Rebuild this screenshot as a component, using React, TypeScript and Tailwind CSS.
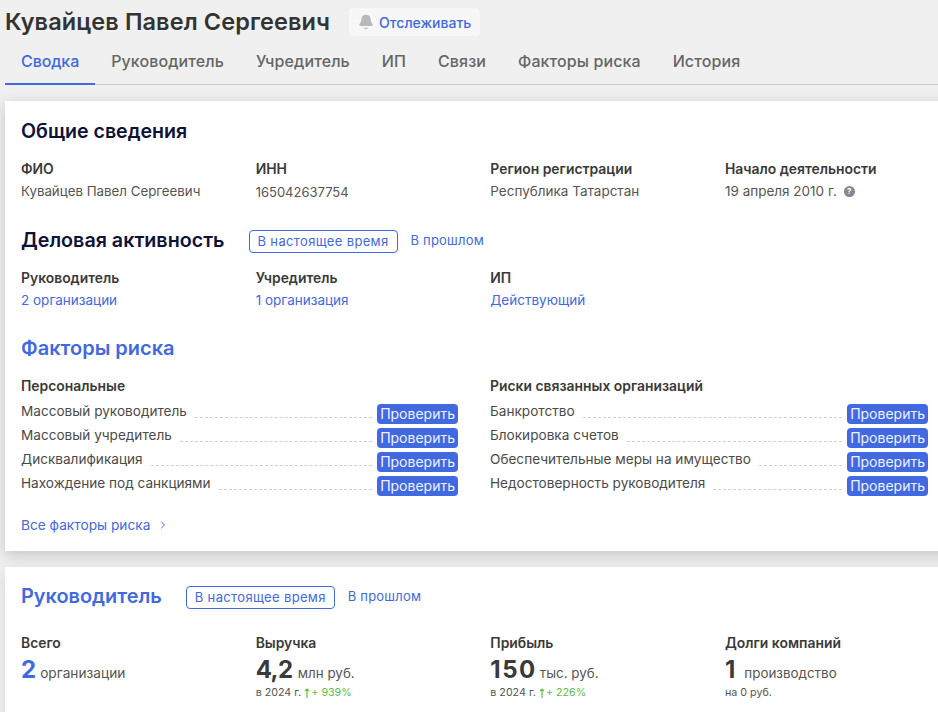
import { Bell, ChevronRight } from "lucide-react";

const tabs = ["Сводка", "Руководитель", "Учредитель", "ИП", "Связи", "Факторы риска", "История"];

const personal = ["Массовый руководитель", "Массовый учредитель", "Дисквалификация", "Нахождение под санкциями"];
const related = ["Банкротство", "Блокировка счетов", "Обеспечительные меры на имущество", "Недостоверность руководителя"];

function Label({ children }: { children: React.ReactNode }) {
  return <div className="text-[13.9px] leading-[20px] font-semibold text-[#3a3a3a]">{children}</div>;
}

function PeriodSwitch() {
  return (
    <div className="flex items-center gap-[13px] text-[13px] text-[#4169e1]">
      <span className="rounded-[4px] border border-[#4169e1] px-2 h-[23px] leading-[21px] tracking-[0.35px] whitespace-nowrap">В настоящее время</span>
      <span className="tracking-[0.2px]">В прошлом</span>
    </div>
  );
}

function RiskList({ title, items }: { title: string; items: string[] }) {
  return (
    <div>
      <Label>{title}</Label>
      <div className="mt-[8px] flex flex-col gap-[4px]">
        {items.map((item) => (
          <div key={item} className="flex h-[20px] items-center">
            <span className="-mt-[6px] text-[13.6px] leading-[20px] text-[#4a4a4a] whitespace-nowrap">{item}</span>
            <span className="mr-[5px] ml-[8px] mt-[7px] flex-1 border-b border-dashed border-[#d0d0d0]" />
            <span className="rounded-[4px] bg-[#4169e1] px-[3px] h-[20px] text-[14px] leading-[19px] text-[#f0f3ff]">Проверить</span>
          </div>
        ))}
      </div>
    </div>
  );
}

function Growth({ year, value }: { year: string; value: string }) {
  return (
    <div className="flex items-center text-[10.7px] leading-[16px] text-[#555]">
      <span>в {year} г.</span>
      <svg width="6" height="10" viewBox="0 0 6 10" className="ml-[3px] mr-[1px]">
        <path d="M3 10V1M1 3l2-2 2 2" fill="none" stroke="#5cc04a" strokeWidth="1.2" />
      </svg>
      <span className="text-[#5cc04a]">+ {value}</span>
    </div>
  );
}

export default function App() {
  return (
    <div className="h-[712px] w-[938px] overflow-hidden bg-[#f0f0f0] pl-[5px] font-['Inter',sans-serif]">
      <div className="flex h-[44px] items-center gap-[19px]">
        <h1 className="text-[23.5px] tracking-[0.1px] font-semibold text-[#333] whitespace-nowrap">Кувайцев Павел Сергеевич</h1>
        <div className="flex h-[28px] items-center gap-[5px] rounded-[4px] bg-[#f7f7f7] pl-[9px] pr-[9px] text-[14px] font-medium text-[#4169e1]">
          <Bell size={16} className="fill-[#b8b8b8] text-[#b8b8b8]" />
          Отслеживать
        </div>
      </div>

      <div className="flex h-[41px] border-b border-[#c8c8c8] text-[16px] tracking-[0.1px] font-medium text-[#666]">
        <div className="h-[41px] border-b-2 border-[#4169e1] px-4 pt-[5px] tracking-[-0.1px] text-[#4169e1]">Сводка</div>
        {tabs.slice(1).map((tab) => (
          <div key={tab} className="px-4 pt-[5px] whitespace-nowrap">{tab}</div>
        ))}
      </div>

      <div className="mt-[16px] h-[450px] w-[960px] bg-white pl-4 pt-[18px] shadow-[0_4px_14px_rgba(0,0,0,0.18)]">
        <h2 className="text-[19.6px] leading-[24px] font-semibold text-[#0f1238]">Общие сведения</h2>
        <div className="mt-[16px] grid grid-cols-[repeat(4,234.67px)] text-[13.5px] text-[#555]">
          <div>
            <Label>ФИО</Label>
            <div className="mt-[2px] text-[13.3px] leading-[21px]">Кувайцев Павел Сергеевич</div>
          </div>
          <div>
            <Label>ИНН</Label>
            <div className="mt-[3px] text-[13px] leading-[21px]">165042637754</div>
          </div>
          <div>
            <Label>Регион регистрации</Label>
            <div className="mt-[2px] leading-[21px]">Республика Татарстан</div>
          </div>
          <div>
            <Label>Начало деятельности</Label>
            <div className="mt-[2px] flex items-center gap-[7px] leading-[21px]">
              19 апреля 2010 г.
              <span className="flex h-[11px] w-[11px] items-center justify-center rounded-full bg-[#84888f] text-[8px] font-bold text-white">?</span>
            </div>
          </div>
        </div>

        <div className="mt-[26px] flex h-[24px] items-center gap-[24px]">
          <h2 className="text-[19.7px] font-semibold text-[#0f1238]">Деловая активность</h2>
          <PeriodSwitch />
        </div>
        <div className="mt-[15px] grid grid-cols-[repeat(4,234.67px)] text-[13.5px] text-[#4169e1]">
          <div>
            <Label>Руководитель</Label>
            <div className="mt-[2px] leading-[20px]">2 организации</div>
          </div>
          <div>
            <Label>Учредитель</Label>
            <div className="mt-[2px] leading-[20px]">1 организация</div>
          </div>
          <div>
            <Label>ИП</Label>
            <div className="mt-[2px] leading-[20px]">Действующий</div>
          </div>
        </div>

        <h2 className="mt-[26px] text-[20px] leading-[24px] font-semibold text-[#4169e1]">Факторы риска</h2>
        <div className="mt-[16px] grid w-[907px] grid-cols-[437px_438px] gap-x-[32px]">
          <RiskList title="Персональные" items={personal} />
          <RiskList title="Риски связанных организаций" items={related} />
        </div>
        <div className="mt-[19px] flex items-center gap-[7px] text-[13.7px] leading-[20px] text-[#4169e1]">
          Все факторы риска
          <ChevronRight size={12} />
        </div>
      </div>

      <div className="mt-[16px] h-[200px] w-[960px] bg-white pl-4 pt-[18px] shadow-[0_4px_14px_rgba(0,0,0,0.1)]">
        <div className="flex h-[24px] items-center gap-[24px]">
          <h2 className="text-[19.9px] font-semibold text-[#4169e1]">Руководитель</h2>
          <PeriodSwitch />
        </div>
        <div className="mt-[24px] grid grid-cols-[repeat(4,234.67px)]">
          <div>
            <Label>Всего</Label>
            <div className="mt-[2px] flex items-baseline gap-[4px] text-[#555]">
              <span className="text-[24px] leading-[30px] font-bold text-[#4169e1]">2</span>
              <span className="text-[13.7px]">организации</span>
            </div>
          </div>
          <div>
            <Label>Выручка</Label>
            <div className="mt-[2px] flex items-baseline gap-[5px] text-[#555]">
              <span className="text-[24px] leading-[30px] tracking-[-0.5px] font-bold text-[#3a3a3a]">4,2</span>
              <span className="text-[13.4px]">млн руб.</span>
            </div>
            <Growth year="2024" value="939%" />
          </div>
          <div>
            <Label>Прибыль</Label>
            <div className="mt-[2px] flex items-baseline gap-[3px] text-[#555]">
              <span className="text-[24px] leading-[30px] tracking-[1.5px] font-bold text-[#3a3a3a]">150</span>
              <span className="text-[13.4px]">тыс. руб.</span>
            </div>
            <Growth year="2024" value="226%" />
          </div>
          <div>
            <Label>Долги компаний</Label>
            <div className="mt-[2px] flex items-baseline gap-[9px] text-[#555]">
              <span className="text-[24px] leading-[30px] font-bold text-[#3a3a3a]">1</span>
              <span className="text-[13.4px]">производство</span>
            </div>
            <div className="text-[10.7px] leading-[16px] text-[#555]">на 0 руб.</div>
          </div>
        </div>
      </div>
    </div>
  );
}
